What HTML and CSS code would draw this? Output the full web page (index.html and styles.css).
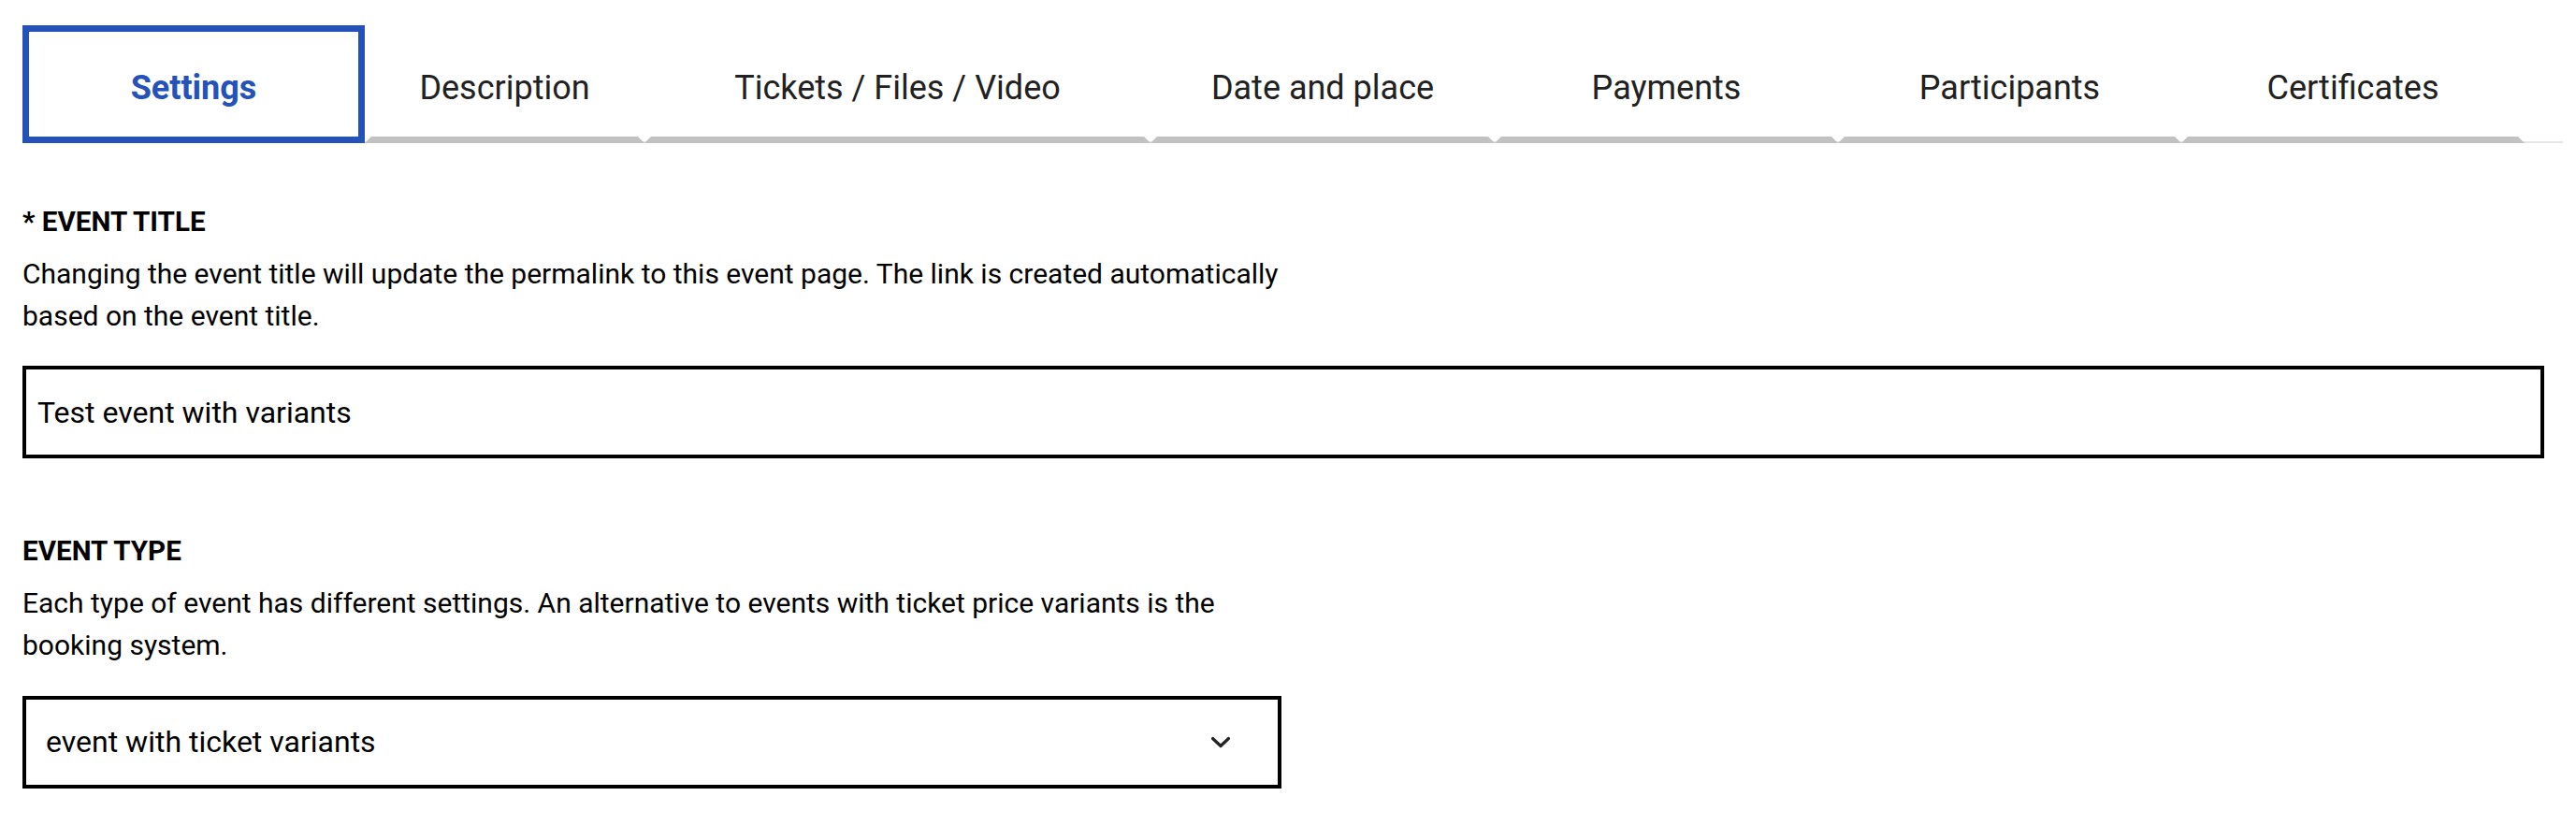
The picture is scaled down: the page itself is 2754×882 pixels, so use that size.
FILE: index.html
```html
<!DOCTYPE html>
<html>
<head>
    <link rel="stylesheet" href="styles.css">
</head>
<body>
    <div class="page">
        <nav class="tabs">
            <a class="tab tab-active"><span class="tab-label">Settings</span></a>
            <a class="tab"><span class="tab-label">Description</span><span class="tab-bar"></span></a>
            <a class="tab"><span class="tab-label">Tickets / Files / Video</span><span class="tab-bar"></span></a>
            <a class="tab"><span class="tab-label">Date and place</span><span class="tab-bar"></span></a>
            <a class="tab"><span class="tab-label">Payments</span><span class="tab-bar"></span></a>
            <a class="tab"><span class="tab-label">Participants</span><span class="tab-bar"></span></a>
            <a class="tab"><span class="tab-label">Certificates</span><span class="tab-bar"></span></a>
        </nav>

        <form class="event-form">
            <div class="field">
                <label class="field-label" for="event-title">* Event title</label>
                <p class="field-help">Changing the event title will update the permalink to this event page. The link is created automatically based on the event title.</p>
                <input type="text" id="event-title" class="text-input" value="Test event with variants">
            </div>

            <div class="field">
                <label class="field-label" for="event-type">Event type</label>
                <p class="field-help">Each type of event has different settings. An alternative to events with ticket price variants is the booking system.</p>
                <div class="select-wrap">
                    <select id="event-type" class="select-input">
                        <option>event with ticket variants</option>
                        <option>simple event</option>
                        <option>booking system</option>
                    </select>
                    <svg class="select-arrow" width="22" height="13" viewBox="0 0 22 13">
                        <path d="M2.5 2.5 L11 10.5 L19.5 2.5" fill="none" stroke="#222" stroke-width="3.2" stroke-linecap="round" stroke-linejoin="round"/>
                    </svg>
                </div>
            </div>
        </form>
    </div>
</body>
</html>
```

FILE: styles.css
```css
/* Event editor - settings tab */
body {
    margin: 0;
    font-family: Roboto, "Liberation Sans", Arial, sans-serif;
    background-color: #fff;
    color: #000;
}

.page {
    padding: 27px 14px 20px 24px;
}

/* Tabs */
.tabs {
    display: grid;
    grid-template-columns: 366px 299px 541px 368px 367px 367px 367px;
    border-bottom: 2px solid #e4e4ec;
}

.tab {
    display: flex;
    flex-direction: column;
    box-sizing: border-box;
    height: 126px;
    margin-bottom: -2px;
    border-top: 7px solid transparent;
    font-size: 36px;
    color: #212121;
    text-decoration: none;
    cursor: pointer;
}

.tab-label {
    flex: 1;
    display: flex;
    align-items: center;
    justify-content: center;
    padding-top: 7px;
    white-space: nowrap;
}

.tab-bar {
    height: 0;
    border-bottom: 7px solid #c1c1c1;
    border-left: 7px solid transparent;
    border-right: 7px solid transparent;
}

.tab-active {
    border: 7px solid #2452b8;
    color: #2452b8;
    font-weight: 700;
}

/* Form */
.event-form {
    padding: 62px 20px 0 0;
}

.field {
    margin-bottom: 77px;
}

.field:last-child {
    margin-bottom: 0;
}

.field-label {
    display: block;
    font-size: 29.6px;
    line-height: 44.8px;
    font-weight: 700;
    text-transform: uppercase;
    margin-bottom: 11px;
}

.field-help {
    max-width: 1346px;
    margin: 0 0 31px;
    font-size: 30px;
    line-height: 44.8px;
}

.text-input,
.select-input {
    display: block;
    box-sizing: border-box;
    width: 100%;
    height: 99px;
    margin: 0;
    border: 4px solid #000;
    border-radius: 0;
    background: #fff;
    font-family: inherit;
    font-size: 32px;
    color: #000;
    outline: none;
}

.text-input {
    padding: 0 12px;
}

.select-wrap {
    position: relative;
    width: 1346px;
}

.select-input {
    padding: 0 80px 0 21px;
    appearance: none;
    -webkit-appearance: none;
}

.select-arrow {
    position: absolute;
    right: 54px;
    top: 43px;
    pointer-events: none;
}
```
